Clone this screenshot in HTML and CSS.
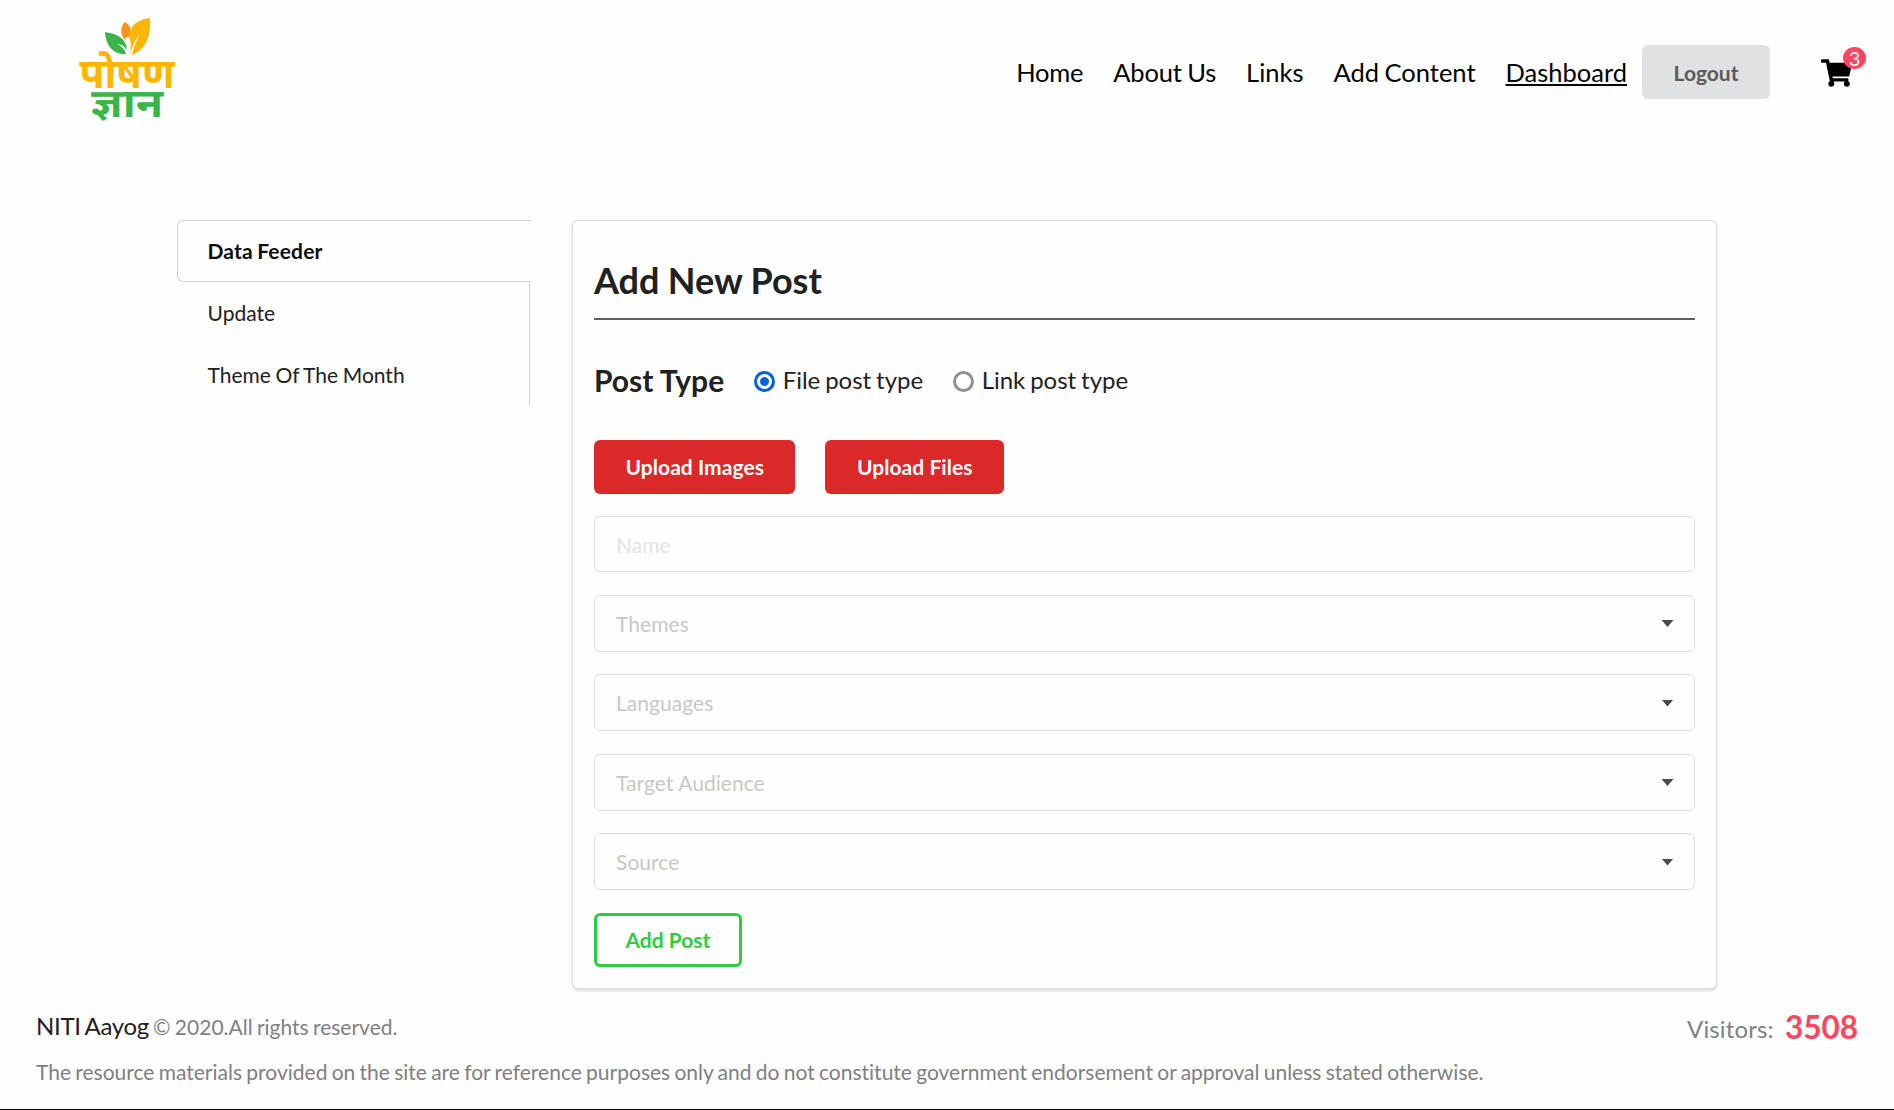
FILE: index.html
```html
<!DOCTYPE html>
<html lang="en">
<head>
<meta charset="utf-8">
<title>Poshan Gyan - Dashboard</title>
<link rel="stylesheet" href="styles.css">
</head>
<body>
<header class="header">
  <a class="logo" aria-label="Poshan Gyan">
    <svg viewBox="0 0 140 135" width="140" height="135">
      <path fill="#3bb54a" d="M66 54C57 55 46 49 45 32C59 34 66 39 67 50Q63 44 57 44Q64 47 66 54Z"/>
      <path fill="#f7941e" d="M65 22C60 27 60 34 65 40L69 38C72 31 71 25 65 22Z"/>
      <path fill="#ffb600" d="M90 18C74 20 68 29 70 39C71 44 71 48 70 54Q73 43 80 34Q74 45 72 55C84 50 91 40 90 18Z"/>
      <circle cx="67.3" cy="38.8" r="1.9" fill="#fff"/>
      <text class="logo-top" transform="translate(19.5 88) scale(1 1.16)" textLength="95" lengthAdjust="spacingAndGlyphs">पोषण</text>
      <text class="logo-bottom" transform="translate(31 116.5) scale(1 1.1)" textLength="72" lengthAdjust="spacingAndGlyphs">ज्ञान</text>
    </svg>
  </a>
  <nav class="nav">
    <a class="home">Home</a>
    <a class="about">About Us</a>
    <a>Links</a>
    <a>Add Content</a>
    <a class="current">Dashboard</a>
  </nav>
  <button class="button logout">Logout</button>
  <a class="cart" aria-label="Cart">
    <svg viewBox="0 0 576 512" width="31" height="28"><path d="M528.12 301.319l47.273-208C578.806 78.301 567.391 64 551.99 64H159.208l-9.166-44.81C147.758 8.021 137.93 0 126.529 0H24C10.745 0 0 10.745 0 24v16c0 13.255 10.745 24 24 24h69.883l70.248 343.435C147.325 417.1 136 435.222 136 456c0 30.928 25.072 56 56 56s56-25.072 56-56c0-15.674-6.447-29.835-16.824-40h209.647C430.447 426.165 424 440.326 424 456c0 30.928 25.072 56 56 56s56-25.072 56-56c0-22.172-12.888-41.332-31.579-50.405l5.517-24.276c3.413-15.018-8.002-29.319-23.403-29.319H218.117l-6.545-32h293.145c11.206 0 20.92-7.754 23.403-18.681z"/></svg>
    <span class="badge">3</span>
  </a>
</header>
<main class="content">
  <aside class="tabs">
    <a class="tab active">Data Feeder</a>
    <a class="tab">Update</a>
    <a class="tab">Theme Of The Month</a>
  </aside>
  <section class="card">
    <h1>Add New Post</h1>
    <div class="post-type">
      <h2>Post Type</h2>
      <label><span class="radio checked"></span>File post type</label>
      <label><span class="radio"></span>Link post type</label>
    </div>
    <div class="uploads">
      <button class="button red">Upload Images</button>
      <button class="button red">Upload Files</button>
    </div>
    <div class="fields">
      <input class="field name" type="text" placeholder="Name">
      <div class="field select">Themes<i class="caret"></i></div>
      <div class="field select">Languages<i class="caret"></i></div>
      <div class="field select">Target Audience<i class="caret"></i></div>
      <div class="field select">Source<i class="caret"></i></div>
    </div>
    <button class="button add">Add Post</button>
  </section>
</main>
<footer class="footer">
  <div class="footer-row">
    <p><span class="org">NITI Aayog</span> © 2020.All rights reserved.</p>
    <p class="visitors">Visitors: <b>3508</b></p>
  </div>
  <p class="disclaimer">The resource materials provided on the site are for reference purposes only and do not constitute government endorsement or approval unless stated otherwise.</p>
</footer>
</body>
</html>
```
FILE: styles.css
```css
* { box-sizing: border-box; }
html, body { height: 100%; }
body {
  margin: 0;
  display: flex;
  flex-direction: column;
  background: #fefefe;
  color: #212121;
  font: 21px/30px Lato, sans-serif;
  font-variant-ligatures: no-common-ligatures;
  word-spacing: -1.1px;
  border-bottom: 1px solid #000;
  overflow: hidden;
}
h1, h2, p { margin: 0; }

.header { display: flex; align-items: flex-start; height: 220px; }
.logo { display: block; margin-left: 60px; height: 135px; }
.logo text { font-family: "Noto Sans Devanagari", "Noto Sans", sans-serif; font-weight: 700; font-size: 36px; }
.logo-top { fill: #ffb600; }
.logo-bottom { fill: #3bb54a; }
.nav { display: flex; gap: 30px; margin-left: auto; padding-top: 53px; font-size: 25.5px; line-height: 38px; color: #000; }
.nav .home { letter-spacing: -.3px; }
.nav .about { letter-spacing: -.12px; }
.nav .current { text-decoration: underline; }

.button {
  height: 54px;
  padding: 0 31.5px;
  border: 0;
  border-radius: 6px;
  font: bold 21px/54px Lato, sans-serif;
}
.logout { margin: 45px 51px 0 15px; padding-top: 1px; background: #e0e1e2; color: #5a5a5a; }
.cart { position: relative; margin: 59px 42px 0 0; width: 31px; height: 28px; }
.cart svg { display: block; }
.badge {
  position: absolute;
  left: 22px;
  top: -12px;
  width: 23px;
  height: 22px;
  border-radius: 50%;
  background: #ff4560;
  color: #fff;
  font-size: 20px;
  line-height: 23px;
  text-align: center;
}

.content { display: flex; gap: 41px; height: 769px; padding: 0 177px; align-items: flex-start; }
.tabs { width: 354px; }
.tab { display: flex; align-items: center; height: 62px; margin-right: 1px; padding-left: 30.5px; border-right: 1px solid #d4d4d5; word-spacing: -.8px; }
.tab.active { margin-right: 0; border: 1px solid #d4d4d5; border-right: 0; border-radius: 6px 0 0 6px; padding-left: 29.5px; font-weight: bold; color: #0d0d0d; letter-spacing: .15px; }

.card {
  flex: 1;
  height: 769px;
  padding: 36px 21px 0;
  border: 1px solid #dcdddd;
  border-radius: 6px;
  background: #fefefe;
  box-shadow: 0 1.5px 3px rgba(34, 36, 38, .15);
}
h1 { height: 63px; border-bottom: 2px solid #606060; font-size: 36px; line-height: 46px; word-spacing: -.4px; }
.post-type { display: flex; align-items: center; gap: 30px; height: 40px; margin-top: 41px; }
h2 { padding-bottom: 2px; font-size: 30px; line-height: 38px; word-spacing: 0; }
label { display: flex; align-items: center; gap: 7.5px; font-size: 24px; line-height: 28px; padding-bottom: 3px; word-spacing: -1.3px; }
.radio { width: 21px; height: 21px; margin-top: 4px; border: 3px solid #8f8f9d; border-radius: 50%; }
.radio.checked { border-color: #0060df; background: radial-gradient(circle, #0060df 4px, #fff 4.8px); }
.uploads { display: flex; gap: 30px; margin-top: 39px; }
.red { background: #db2828; color: #fff; letter-spacing: .05px; }

.fields { display: grid; grid-template-rows: 56px repeat(4, 57px); row-gap: 22.5px; margin-top: 22px; }
.field {
  display: flex;
  align-items: center;
  justify-content: space-between;
  width: 100%;
  padding: 0 20.5px 0 21px;
  border: 1px solid #dedede;
  border-radius: 6px;
  background: #fefefe;
  color: #c8c8c8;
  font: 21px Lato, sans-serif;
  letter-spacing: .05px;
  word-spacing: 0;
}
.name { padding-top: 1px; }
.name::placeholder { color: #e4e4e4; opacity: 1; }
.caret { width: 12px; height: 7px; margin-top: 1px; background: #4c4c4c; clip-path: polygon(0 0, 100% 0, 50% 100%); }
.add { margin-top: 23px; background: transparent; color: #2ecc40; box-shadow: inset 0 0 0 3px #2ecc40; }

.footer { padding: 19px 36px 0; color: #808080; }
.footer-row { display: flex; justify-content: space-between; height: 49px; line-height: 36px; }
.org { font-size: 24px; color: #212121; letter-spacing: -.33px; }
.visitors { font-size: 24px; letter-spacing: .15px; }
.visitors b { position: relative; top: 1px; margin-left: 6px; font-size: 31.5px; color: #ff4560; letter-spacing: 0; }
.disclaimer { line-height: 30px; }
```
